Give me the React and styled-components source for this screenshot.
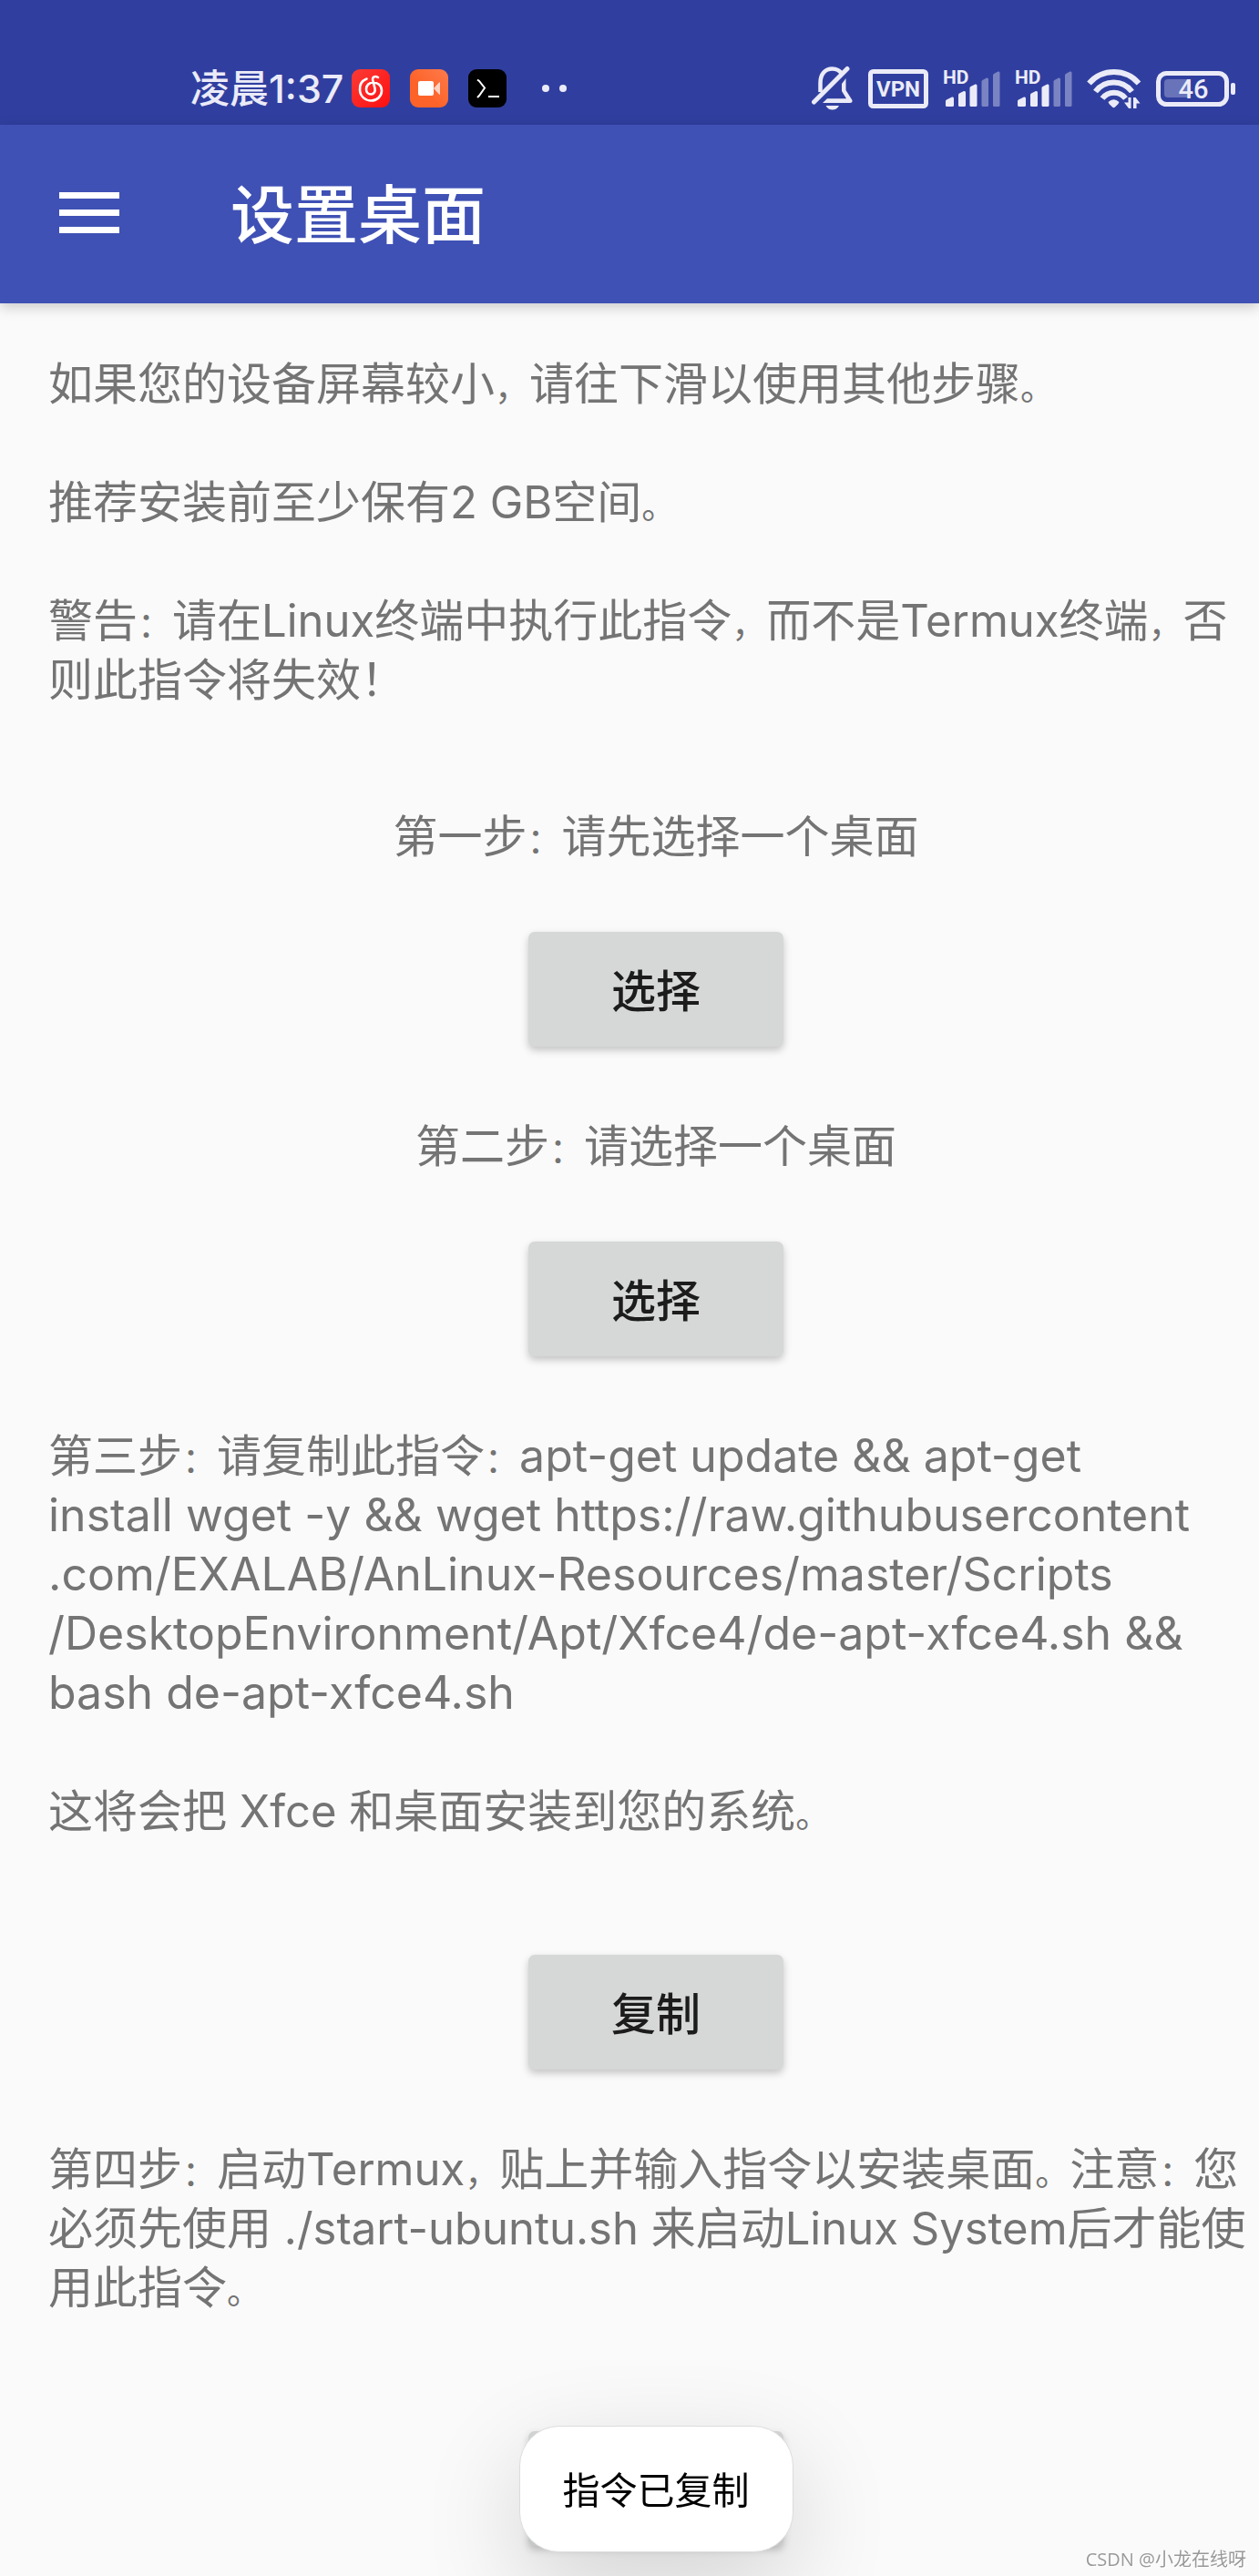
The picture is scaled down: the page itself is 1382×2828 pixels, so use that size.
import React from 'react';
import styled, { createGlobalStyle } from 'styled-components';

const GlobalStyle = createGlobalStyle`
	* {
		box-sizing: border-box;
	}

	body {
		margin: 0;
		overflow-x: hidden;
		background-color: #fafafa;
		font-family: Inter, 'Noto Sans CJK SC', sans-serif;
	}
`

const Page = styled.div`
	min-height: 100vh;
	color: #747474;
`

const StatusBar = styled.div`
	display: flex;
	align-items: flex-end;
	justify-content: space-between;
	height: 137px;
	padding: 0 26px 12px 209px;
	background-color: #303f9f;
	color: #ebebf8;
`

const StatusGroup = styled.div`
	display: flex;
	align-items: center;
	gap: ${props => props.gap}px;
	height: 56px;
`

const Clock = styled.span`
	width: 165px;
	margin-right: -10px;
	font-size: 43px;
	font-weight: 500;
	line-height: 56px;
	white-space: nowrap;
`

const StatusIcon = styled.svg`
	display: block;
	flex: none;
	font-family: Roboto, sans-serif;
	font-weight: 700;
`

const Toolbar = styled.header`
	position: relative;
	display: flex;
	align-items: center;
	gap: 122px;
	height: 196px;
	padding: 0 65px;
	background-color: #3f51b5;
	box-shadow: 0 4px 14px rgba(0, 0, 0, 0.2);
`

const MenuButton = styled.button`
	display: flex;
	flex-direction: column;
	gap: 12px;
	width: 66px;
	padding: 0 0 4px;
	border: 0;
	background: none;
`

const MenuLine = styled.span`
	height: 7px;
	background-color: #fff;
`

const Title = styled.h1`
	margin: 0;
	padding-top: 4px;
	color: #fff;
	font-size: 70px;
	font-weight: 500;
	line-height: 80px;
`

const Content = styled.main`
	padding-top: 56px;
	font-size: 49px;
	line-height: 65px;
	white-space: nowrap;
`

const Prose = styled.section`
	padding-left: 53px;
`

const Paragraph = styled.p`
	margin: 0;

	& + & {
		margin-top: 65px;
	}
`

const Command = styled.span`
	font-size: 50px;
`

const Mark = styled.span`
	font-size: 38px;
	line-height: 0;
`

const Step = styled.section`
	display: flex;
	flex-direction: column;
	align-items: center;
	gap: 72px;
	margin-top: ${props => props.top}px;
	padding-left: 58px;

	& + & {
		margin-top: 77px;
	}

	& + ${Prose} {
		margin-top: 77px;
	}
`

const StepLabel = styled.h2`
	margin: 0;
	font-size: 49px;
	font-weight: 400;
`

const Button = styled.button`
	min-width: 280px;
	height: 126px;
	padding: 4px 40px 0;
	border: 0;
	border-radius: 7px;
	background-color: #d6d7d7;
	box-shadow: 0 4px 8px rgba(0, 0, 0, 0.22);
	color: #1c1c1c;
	font-family: inherit;
	font-size: 49px;
	font-weight: 500;
	line-height: 65px;
`

const ToastLayer = styled.div`
	position: fixed;
	right: 0;
	bottom: 26px;
	left: 58px;
	display: flex;
	justify-content: center;
	pointer-events: none;
`

const Toast = styled.div`
	padding: 39px 47px 36px;
	border: 1px solid #dcdcdc;
	border-radius: 44px;
	background-color: #fff;
	box-shadow: 0 36px 110px rgba(0, 0, 0, 0.16);
	color: #000;
	font-size: 41px;
	line-height: 62px;
`

const Watermark = styled.div`
	position: fixed;
	right: 14px;
	bottom: 4px;
	color: #999;
	font-family: 'Open Sans', 'Noto Sans CJK SC', sans-serif;
	font-size: 20px;
	line-height: 28px;
	text-shadow: 1px 1px 0 #fff;
`

// full-width marks are set smaller than the characters around them
const withMarks = text => text.split(/([，：。])/).map((part, index) => (
	index % 2 ? <Mark key={index}>{part}</Mark> : part
));

const MusicIcon = () => (
	<StatusIcon width="42" height="42" viewBox="0 0 42 42" fill="none">
		<defs>
			<linearGradient id="music" x1="0" y1="0" x2="1" y2="1">
				<stop offset="0" stopColor="#fb3b36" />
				<stop offset="1" stopColor="#fd0f10" />
			</linearGradient>
		</defs>
		<rect width="42" height="42" rx="9" fill="url(#music)" />
		<path
			d="M16.5 10.5C10.5 13 8.5 18 9 23C9.5 30 15 34.5 21.5 34.5C28 34.5 33 29.5 33 23.5C33 17.5 28.5 14.5 23.5 14.5C19 14.5 16 18 16 22C16 25.5 18.5 27.5 21.2 27.5C24.5 27.5 26.3 24.5 25.5 21L23.2 12C22.5 8.5 25.5 6.8 29 9"
			stroke="#fff"
			strokeWidth="2.6"
			strokeLinecap="round"
		/>
	</StatusIcon>
);

const RecorderIcon = () => (
	<StatusIcon width="42" height="42" viewBox="0 0 42 42">
		<defs>
			<linearGradient id="recorder" x1="0" y1="1" x2="1" y2="0">
				<stop offset="0.4" stopColor="#fd6329" />
				<stop offset="1" stopColor="#fd7b4c" />
			</linearGradient>
		</defs>
		<rect width="42" height="42" rx="9" fill="url(#recorder)" />
		<rect x="9" y="13" width="17" height="16" rx="2" fill="#fff" />
		<path d="M26 21L32 14.5Q33 14 33 15V27Q33 28.5 32 27.5Z" fill="#fff" opacity="0.7" />
	</StatusIcon>
);

const TerminalIcon = () => (
	<StatusIcon width="42" height="42" viewBox="0 0 42 42" fill="none">
		<rect width="42" height="42" rx="9" fill="#000" />
		<path d="M10 11.5L12 13L18 20.5L12 29L10 31M22 30H34" stroke="#fff" strokeWidth="2" />
	</StatusIcon>
);

const DotsIcon = () => (
	<StatusIcon width="64" height="8" viewBox="0 0 64 8" fill="currentColor">
		<circle cx="21" cy="4" r="4" />
		<circle cx="40" cy="4" r="4" />
	</StatusIcon>
);

const MutedIcon = () => (
	<StatusIcon width="46" height="50" viewBox="0 0 46 50" fill="none" stroke="currentColor">
		<path d="M9.5 29V19C9.5 9 15 3.5 22.5 3.5C27 3.5 30.5 5 33 9" strokeWidth="4.5" />
		<path d="M39 3.5L2.5 40" strokeWidth="5" strokeLinecap="round" />
		<path d="M12 41L17 36.2H38L33 28V20L37.5 14V27L44.5 38Q45 41 42 41Z" fill="currentColor" stroke="none" />
		<path d="M15.5 44H30Q27.5 48.5 22.7 48.5Q18 48.5 15.5 44Z" fill="currentColor" stroke="none" />
	</StatusIcon>
);

const VpnIcon = () => (
	<StatusIcon width="66" height="43" viewBox="0 0 66 43" fill="currentColor">
		<rect x="2.5" y="2.5" width="61" height="38" rx="3" fill="none" stroke="currentColor" strokeWidth="5" />
		<text x="33" y="30" fontSize="24" textAnchor="middle">VPN</text>
	</StatusIcon>
);

const SignalIcon = () => (
	<StatusIcon width="63" height="57" viewBox="0 -8 63 57" fill="currentColor">
		<text x="0" y="15" fontSize="21">HD</text>
		<path d="M3 34Q3 33 4 32.5L10 29.5Q12 29 12 31V38.5Q12 40 10.5 40H4.5Q3 40 3 38.5Z" />
		<path d="M17 27Q17 26 18 25.5L23 23Q25 22.5 25 24.5V38.5Q25 40 23.5 40H18.5Q17 40 17 38.5Z" />
		<path d="M29.5 19.5Q29.5 18.5 30.5 18L35.5 15.5Q37.5 15 37.5 17V38.5Q37.5 40 36 40H31Q29.5 40 29.5 38.5Z" />
		<g opacity="0.4">
			<path d="M42.5 12.5Q42.5 11.5 43.5 11L48 8.5Q50 8 50 10V38.5Q50 40 48.5 40H44Q42.5 40 42.5 38.5Z" />
			<path d="M55 5.5Q55 4.5 56 4L60.5 1.5Q62.5 1 62.5 3V38.5Q62.5 40 61 40H56.5Q55 40 55 38.5Z" />
		</g>
	</StatusIcon>
);

const WifiIcon = () => (
	<StatusIcon width="60" height="45" viewBox="0 0 60 45" fill="none" stroke="currentColor" strokeWidth="6">
		<path d="M2.5 16.5A36 36 0 0 1 57 16.5" />
		<path d="M9.5 25.5A25 25 0 0 1 49.5 25.5" />
		<path d="M17 33A16 16 0 0 1 42.5 33" />
		<g fill="currentColor" stroke="none">
			<path d="M23.5 37Q29.5 31.5 35.5 37Q35 39 31 42.5Q29.5 44 28 42.5Q24 39 23.5 37Z" />
			<path d="M45.5 32H48.5V44H46L41 37.5H45.5Z" />
			<path d="M51 32H53.5L58.5 38.5H54.5V44H51Z" />
		</g>
	</StatusIcon>
);

const BatteryIcon = () => (
	<StatusIcon width="87" height="39" viewBox="0 0 87 39" fill="currentColor">
		<rect x="2.5" y="2.5" width="75" height="34" rx="9" fill="none" stroke="currentColor" strokeWidth="5" />
		<rect x="9" y="9" width="29" height="20" rx="4" opacity="0.3" />
		<rect x="82" y="13" width="5" height="13" rx="2" />
		<text x="41" y="30" fontSize="29" fontWeight="500" textAnchor="middle">46</text>
	</StatusIcon>
);

const App = () => {
	return (
		<Page lang="zh-CN">
			<GlobalStyle />
			<StatusBar>
				<StatusGroup gap={22}>
					<Clock>凌晨1:37</Clock>
					<MusicIcon />
					<RecorderIcon />
					<TerminalIcon />
					<DotsIcon />
				</StatusGroup>
				<StatusGroup gap={16}>
					<MutedIcon />
					<VpnIcon />
					<SignalIcon />
					<SignalIcon />
					<WifiIcon />
					<BatteryIcon />
				</StatusGroup>
			</StatusBar>
			<Toolbar>
				<MenuButton type="button" aria-label="菜单">
					<MenuLine />
					<MenuLine />
					<MenuLine />
				</MenuButton>
				<Title>设置桌面</Title>
			</Toolbar>
			<Content>
				<Prose>
					<Paragraph>{withMarks('如果您的设备屏幕较小，请往下滑以使用其他步骤。')}</Paragraph>
					<Paragraph>{withMarks('推荐安装前至少保有2 GB空间。')}</Paragraph>
					<Paragraph>
						{withMarks('警告：请在Linux终端中执行此指令，而不是Termux终端，否')}<br />
						则此指令将失效！
					</Paragraph>
				</Prose>
				<Step top={107}>
					<StepLabel>{withMarks('第一步：请先选择一个桌面')}</StepLabel>
					<Button type="button">选择</Button>
				</Step>
				<Step>
					<StepLabel>{withMarks('第二步：请选择一个桌面')}</StepLabel>
					<Button type="button">选择</Button>
				</Step>
				<Prose>
					<Paragraph>
						{withMarks('第三步：请复制此指令：')}
						<Command>
							apt-get update && apt-get<br />
							install wget -y && wget https://raw.githubusercontent<br />
							.com/EXALAB/AnLinux-Resources/master/Scripts<br />
							/DesktopEnvironment/Apt/Xfce4/de-apt-xfce4.sh &&<br />
							bash de-apt-xfce4.sh
						</Command>
					</Paragraph>
					<Paragraph>{withMarks('这将会把 Xfce 和桌面安装到您的系统。')}</Paragraph>
				</Prose>
				<Step top={125}>
					<Button type="button">复制</Button>
				</Step>
				<Prose>
					<Paragraph>
						{withMarks('第四步：启动Termux，贴上并输入指令以安装桌面。注意：您')}<br />
						必须先使用 ./start-ubuntu.sh 来启动Linux System后才能使<br />
						{withMarks('用此指令。')}
					</Paragraph>
				</Prose>
				<Step top={125}>
					<Button type="button" aria-label="启动" />
				</Step>
			</Content>
			<ToastLayer>
				<Toast role="status">指令已复制</Toast>
			</ToastLayer>
			<Watermark>CSDN @小龙在线呀</Watermark>
		</Page>
	);
}

export default App;
